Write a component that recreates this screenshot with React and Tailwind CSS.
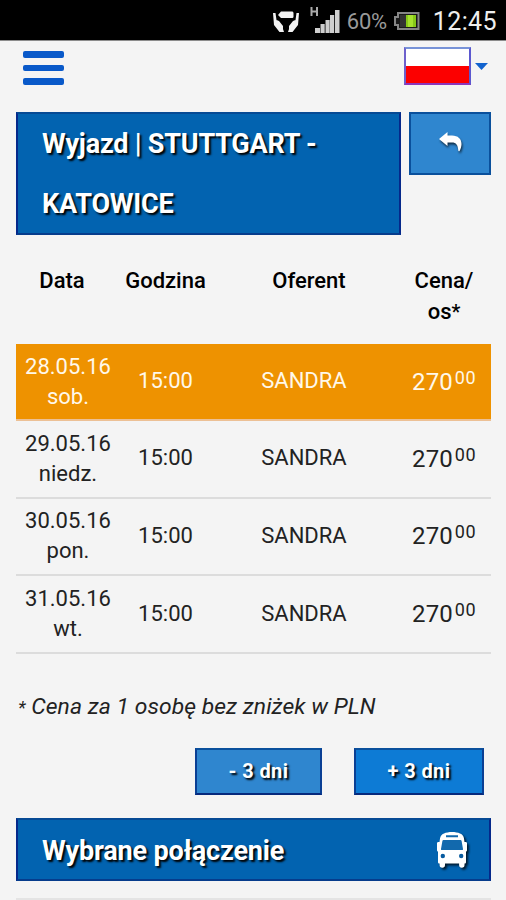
const connections = [
    {date: "28.05.16", day: "sob.", time: "15:00", carrier: "SANDRA", price: "270", selected: true},
    {date: "29.05.16", day: "niedz.", time: "15:00", carrier: "SANDRA", price: "270"},
    {date: "30.05.16", day: "pon.", time: "15:00", carrier: "SANDRA", price: "270"},
    {date: "31.05.16", day: "wt.", time: "15:00", carrier: "SANDRA", price: "270"},
]

export default function App() {

    return (
        <div className="flex h-[900px] w-[506px] flex-col overflow-hidden bg-[#f4f4f4] font-['Roboto',sans-serif] text-black">
            <StatusBar />
            <Header />
            <main className="flex flex-col pr-[15px] pl-4">
                <div className="flex items-start gap-2">
                    <h1 className="h-[123px] w-[385px] border-2 border-t-[#064a94] border-x-[#05288a] border-b-[#063c8c] bg-[#0263b0] pl-6 text-[27px] leading-[60px] font-bold tracking-[-0.2px] text-white [text-shadow:2px_2px_2px_#000]">
                        Wyjazd | STUTTGART -<br />KATOWICE
                    </h1>
                    <button className="flex h-[63px] w-[82px] items-center justify-center border-2 border-[#0a509c] bg-[#2f86cf] pl-0.5 pb-1">
                        <BackIcon />
                    </button>
                </div>
                <Connections />
                <p className="mt-[37px] pl-0.5 text-[22.9px] leading-8 tracking-[0.05px] text-[#222] italic whitespace-nowrap"><span className="text-[18px]">*</span> Cena za 1 osobę bez zniżek w PLN</p>
                <div className="mt-6 flex justify-end gap-8 pr-[7px]">
                    <DayButton label="- 3 dni" className="w-[127px] bg-[#2f86cf]" />
                    <DayButton label="+ 3 dni" className="w-[130px] bg-[#0d7bd5]" />
                </div>
                <div className="mt-[23px] flex h-[63px] items-center justify-between border-2 border-t-[#064a94] border-x-[#05288a] border-b-[#063c8c] bg-[#0263b0] pr-[21px] pl-6">
                    <h2 className="pt-1 text-[27px] font-bold tracking-[-0.15px] text-white [text-shadow:2px_2px_2px_#000]">Wybrane połączenie</h2>
                    <BusIcon />
                </div>
                <div className="mt-[17px] h-0.5 bg-[#e4e4e4]" />
            </main>
        </div>
    )

}

function StatusBar() {

    return (
        <div className="flex h-[41px] shrink-0 items-center justify-end border-b border-[#8c8c8c] bg-black pt-[3px] pr-[9px]">
            <svg className="mr-2.5 h-[22px] w-[28px]" viewBox="0 0 28 22" fill="#f2f2f2">
                <path d="M9 .500h10.500c1.500 0 2 .5 2 2v3c0 1-.5 1.500-2 1.500H9L6 4z" />
                <path d="M1 2h2.500l1 7 5.500 6 2 6H7.500L2 14zM27 2h-2.500l-1 7-5.500 6-2 6h4.500L26 14z" />
                <path d="m4.500 9 2.500 1 4 5v6l-5-6zM23.500 9 21 10l-4 5v6l5-6z" />
            </svg>
            <svg className="mr-[7px] h-[28px] w-[30px] -translate-y-0.5" viewBox="0 0 30 28">
                <path d="M1.500 1v9M7 1v9M1.500 5.500H7" stroke="#aaa" strokeWidth="2" />
                <path d="M5 22h5v5H5zM10.500 18h4.200v9h-4.200zM15.500 14h4.200v13h-4.200zM20 9h4.200v18H20zM25 4h4.500v23H25z" fill="#cfcfcf" />
            </svg>
            <span className="w-[41px] text-[22px] tracking-[-0.2px] whitespace-nowrap text-[#999]">60%</span>
            <svg className="mr-[13px] ml-1.5 h-[18px] w-[26px] -translate-y-px" viewBox="0 0 26 18">
                <path d="M4 1h20.500v16H4v-4H1V5h3z" fill="#191919" stroke="#858585" strokeWidth="2" />
                <path d="M6 3h6v12H6z" fill="#333" />
                <path d="M12 3h10v12H12z" fill="#86c818" />
                <path d="M14 3h5v12h-5z" fill="#a6e22d" />
            </svg>
            <span className="text-[25px] tracking-[0.4px] text-[#eee]">12:45</span>
        </div>
    )

}

function Header() {

    return (
        <header className="flex h-[71px] shrink-0 items-start justify-between pr-[18px] pl-[23px]">
            <div className="mt-2.5 flex flex-col gap-[7px]">
                <span className="h-[6.500px] w-[41px] rounded-[2px] bg-[#0959c9]" />
                <span className="h-[6.500px] w-[41px] rounded-[2px] bg-[#0959c9]" />
                <span className="h-[6.500px] w-[41px] rounded-[2px] bg-[#0959c9]" />
            </div>
            <div className="mt-1.5 flex items-center gap-1">
                <div className="flex h-[38px] w-[67px] flex-col border-2 border-t-[#7893d8] border-r-[#5b58cf] border-b-[#8c35bb] border-l-[#6d60cc]">
                    <span className="flex-1 bg-white" />
                    <span className="flex-1 bg-[#fc0000]" />
                </div>
                <svg className="h-[7px] w-[13px]" viewBox="0 0 13 7">
                    <path d="M0 0h13L6.500 7z" fill="#1263ce" />
                </svg>
            </div>
        </header>
    )

}

function Connections() {

    return (
        <div className="flex flex-col text-center text-[22px]">
            <div className="grid h-[109px] grid-cols-[104px_91px_186px_94px] pt-[30px] leading-[31px] font-medium">
                <div className="pr-3">Data</div>
                <div>Godzina</div>
                <div className="pl-2.5">Oferent</div>
                <div>Cena/<br />os<span className="text-[20px]">*</span></div>
            </div>
            {connections.map((item) => (
                <Connection key={item.date} item={item} />
            ))}
        </div>
    )

}

function Connection({item}) {

    return (
        <div className={(item.selected)
            ? "grid h-[77px] grid-cols-[104px_91px_186px_94px] items-center border-b-2 border-[#ecc095] bg-[#ee9200] text-[#fff8ea]"
            : "grid h-[77.66px] grid-cols-[104px_91px_186px_94px] items-center border-b-2 border-[#dcdcdc] text-[#222]"
        }>
            <div className="leading-[30px]">{item.date}<br />{item.day}</div>
            <div className="pb-0.5">{item.time}</div>
            <div className="pb-0.5">{item.carrier}</div>
            <div className="flex items-start justify-center text-[24px] leading-[30px] tracking-[0.1px]">
                {item.price}
                <span className="ml-0.5 text-[18px] leading-[22px] tracking-[0.4px]">00</span>
            </div>
        </div>
    )

}

function DayButton({label, className}) {

    return (
        <button className={"h-[47px] border-2 border-t-[#0a509c] border-x-[#0a3f94] border-b-[#06297c] text-[20px] font-bold tracking-[0.4px] text-white [text-shadow:2px_2px_2px_#000] " + className}>
            {label}
        </button>
    )

}

function BackIcon() {

    return (
        <svg className="h-[22px] w-[26px] drop-shadow-[1px_2px_1px_#000a]" viewBox="0 0 26 22" fill="#fff">
            <path d="M1 8 9.500 1v3.500H14c6 0 9.500 3.500 9.500 8.500 0 2.500-.8 5-2 7-.4.500-1.200.300-1.200-.4C20 14 18 11.500 14 11.500H9.500V15z" />
        </svg>
    )

}

function BusIcon() {

    return (
        <svg className="h-[37px] w-[32px] drop-shadow-[2px_2px_1px_#000b]" viewBox="0 0 32 37">
            <path d="M8 2.500C12 .500 20 .500 24 2.500c2.500 1 3.500 2.500 4 5l.5 3.500h1c1 0 1.500.500 1.500 1.500V19c0 1-.5 1.500-1 1.500V31c0 1-.5 1.500-1.500 1.500v1.500a2.700 2.700 0 0 1-5.400 0v-1.500H9v1.500a2.700 2.700 0 0 1-5.400 0v-1.500C2.500 32.500 2 32 2 31V20.500c-.5 0-1-.5-1-1.500v-6.500C1 11.500 1.500 11 2.500 11h1L4 7.500c.5-2.500 1.500-4 4-5z" fill="#fff" />
            <path d="M10 4.300h12v2H10zM7.500 9h17c.6 0 1 .3 1.100.9L27 18c.1.600-.2 1-.8 1H5.800c-.6 0-.9-.4-.8-1l1.400-8.100c.1-.6.500-.9 1.100-.9z" fill="#1269ad" />
            <circle cx="6.800" cy="25" r="2.200" fill="#075a9f" />
            <circle cx="25.200" cy="25" r="2.200" fill="#075a9f" />
        </svg>
    )

}
